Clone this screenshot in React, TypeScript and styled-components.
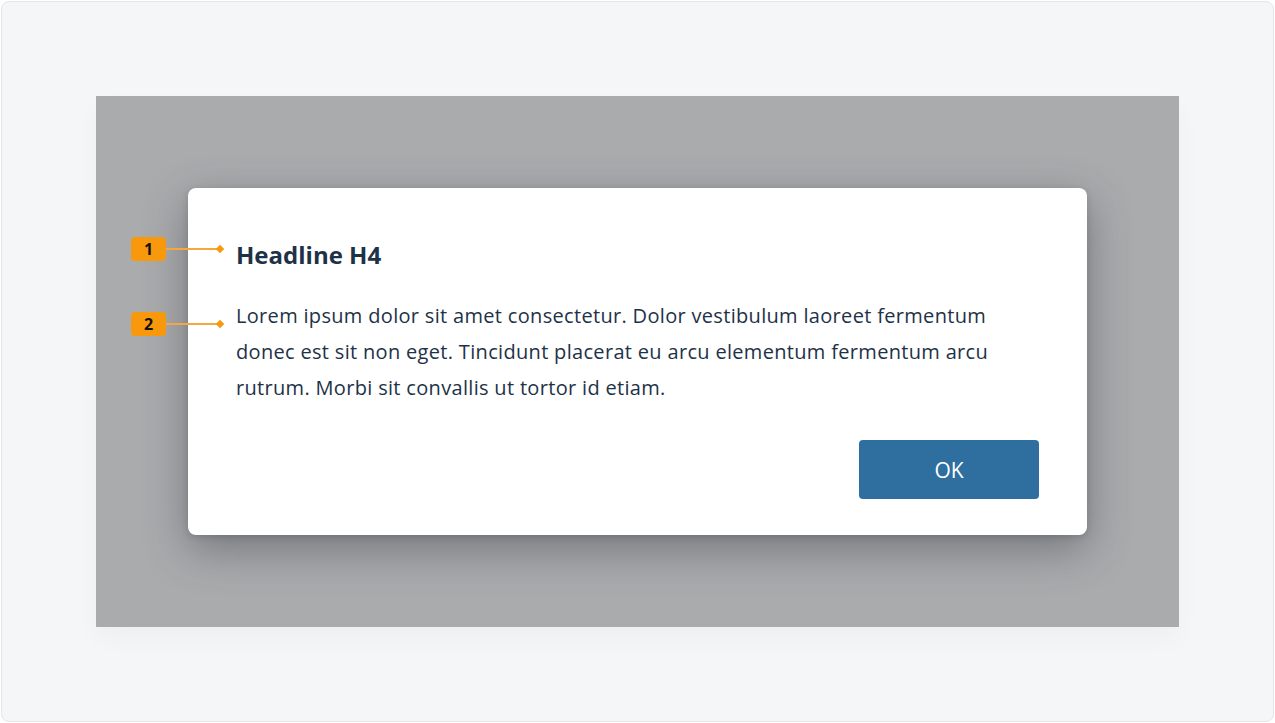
import React from "react";
import styled, { createGlobalStyle } from "styled-components";

const Global = createGlobalStyle`
  html, body { margin: 0; padding: 0; background: #ffffff; }
  body { font-family: "Open Sans", "Noto Sans", sans-serif; }
  * { box-sizing: border-box; }
`;

const Frame = styled.div`
  margin: 1px;
  width: 1273px;
  height: 721px;
  border: 1px solid #e4e6ea;
  border-radius: 8px;
  background: #f5f6f8;
  padding: 94px;
  display: flex;
`;

const Overlay = styled.div`
  flex: 1;
  background: #aaabad;
  padding: 92px;
  display: flex;
  box-shadow: 0 12px 24px rgba(0, 0, 0, 0.03);
`;

const Dialog = styled.div`
  flex: 1;
  background: #ffffff;
  border-radius: 8px;
  padding: 50px 48px 36px 48px;
  display: flex;
  flex-direction: column;
  box-shadow: 0 14px 44px rgba(50, 56, 62, 0.45), 0 2px 6px rgba(50, 56, 62, 0.2);
`;

const Annotated = styled.div`
  position: relative;
`;

const Headline = styled.h4`
  margin: 0;
  font-family: "Open Sans", "Noto Sans", sans-serif;
  font-weight: 700;
  font-size: 24px;
  line-height: 34px;
  color: #1e3247;
`;

const Body = styled.p`
  margin: 26px 0 0 0;
  font-family: "Open Sans", "Noto Sans", sans-serif;
  font-weight: 400;
  font-size: 20px;
  letter-spacing: 0.32px;
  line-height: 36px;
  color: #1e3247;
`;

const Marker = styled.div<{ $top: number }>`
  position: absolute;
  left: -105px;
  top: ${(p) => p.$top}px;
  display: flex;
  align-items: center;
`;

const Badge = styled.span`
  width: 35px;
  height: 24px;
  border-radius: 4px;
  background: #f7980d;
  color: #111111;
  font-family: "Open Sans", "Noto Sans", sans-serif;
  font-weight: 700;
  font-size: 16px;
  display: flex;
  align-items: center;
  justify-content: center;
`;

const Leader = styled.span`
  width: 52px;
  height: 1.5px;
  background: #f6a63e;
`;

const Diamond = styled.span`
  width: 6px;
  height: 6px;
  background: #f7980d;
  transform: rotate(45deg);
  margin-left: -1px;
`;

const Actions = styled.div`
  margin-top: auto;
  display: flex;
  justify-content: flex-end;
`;

const Button = styled.button`
  width: 180px;
  height: 59px;
  border: none;
  border-radius: 4px;
  background: #2e6fa0;
  color: #ffffff;
  font-family: "Open Sans", "Noto Sans", sans-serif;
  font-size: 21px;
  font-weight: 400;
  cursor: pointer;
`;

function Annotation({ n, top }: { n: number; top: number }) {
  return (
    <Marker $top={top}>
      <Badge>{n}</Badge>
      <Leader />
      <Diamond />
    </Marker>
  );
}

export default function App() {
  return (
    <>
      <Global />
      <Frame>
        <Overlay>
          <Dialog>
            <Annotated>
              <Annotation n={1} top={-1} />
              <Headline>Headline H4</Headline>
            </Annotated>
            <Annotated>
              <Annotation n={2} top={40} />
              <Body>
                Lorem ipsum dolor sit amet consectetur. Dolor vestibulum laoreet fermentum donec est sit non
                eget. Tincidunt placerat eu arcu elementum fermentum arcu rutrum. Morbi sit convallis ut tortor
                id etiam.
              </Body>
            </Annotated>
            <Actions>
              <Button>OK</Button>
            </Actions>
          </Dialog>
        </Overlay>
      </Frame>
    </>
  );
}
